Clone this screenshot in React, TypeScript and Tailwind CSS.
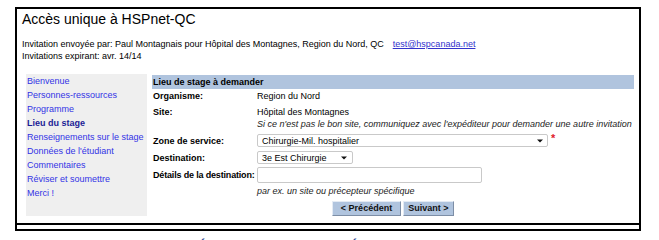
const links = [
  "Bienvenue",
  "Personnes-ressources",
  "Programme",
  "Lieu du stage",
  "Renseignements sur le stage",
  "Données de l'étudiant",
  "Commentaires",
  "Réviser et soumettre",
  "Merci !",
];

function Caret() {
  return (
    <svg width="6" height="4" viewBox="0 0 6 4" className="shrink-0">
      <path d="M0 0.5 H6 L3 3.5 Z" fill="#111" />
    </svg>
  );
}

export default function App() {
  return (
    <main className="w-[659px] h-[240px] overflow-hidden bg-white text-black font-['Liberation_Sans',Arial,sans-serif] text-[9px]">
      <div className="pt-[7px] pl-[15px]">
        <div className="w-[626px] border-2 border-black">
          <div className="pt-[2px] pl-[5px] pr-[5px] pb-[7px]">
            <h1 className="text-[14px] leading-[16px] font-normal">Accès unique à HSPnet-QC</h1>

            <div className="mt-[11px] leading-[12px]">
              <div className="flex">
                <span>Invitation envoyée par: Paul Montagnais pour Hôpital des Montagnes, Region du Nord, QC</span>
                <a href="#" className="ml-[9px] text-[#3333cc] underline">test@hspcanada.net</a>
              </div>
              <div>Invitations expirant: avr. 14/14</div>
            </div>

            <div className="mt-[12px] ml-[4px] flex gap-[5px]">
              <nav className="w-[121px] shrink-0 bg-[#efefef] pl-[1px]">
                {links.map((l) => (
                  <div
                    key={l}
                    className={
                      l === "Lieu du stage"
                        ? "leading-[14px] font-bold text-[#1c1c96] whitespace-nowrap"
                        : "leading-[14px] text-[#3333e6] whitespace-nowrap"
                    }
                  >
                    {l}
                  </div>
                ))}
              </nav>

              <section className="flex-1 pt-[1px] leading-[12px]">
                <div className="h-[14px] leading-[14px] bg-[#b0c4de] pl-[1px] font-bold">
                  Lieu de stage à demander
                </div>

                <div className="grid grid-cols-[105px_1fr]">
                  <div className="pl-[1px] pt-[1px] pb-[4px] font-bold">Organisme:</div>
                  <div className="pt-[1px] pb-[4px]">Region du Nord</div>

                  <div className="pl-[1px] font-bold">Site:</div>
                  <div>
                    <div>Hôpital des Montagnes</div>
                    <div className="italic text-[#222]">
                      Si ce n'est pas le bon site, communiquez avec l'expéditeur pour demander une autre invitation
                    </div>
                  </div>

                  <div className="pl-[1px] mt-[4px] h-[13px] flex items-center font-bold">Zone de service:</div>
                  <div className="mt-[4px] flex items-start">
                    <div className="w-[291px] h-[13px] flex items-center justify-between border border-[#c9c9c9] rounded-[2px] bg-white pl-[4px] pr-[4px]">
                      <span>Chirurgie-Mil. hospitalier</span>
                      <Caret />
                    </div>
                    <span className="ml-[3px] -mt-[1px] text-[11px] leading-[11px] font-bold text-[#e0202a]">*</span>
                  </div>

                  <div className="pl-[1px] mt-[4px] h-[13px] flex items-center font-bold">Destination:</div>
                  <div className="mt-[4px]">
                    <div className="w-[96px] h-[13px] flex items-center justify-between border border-[#c9c9c9] rounded-[2px] bg-white pl-[4px] pr-[5px]">
                      <span>3e Est Chirurgie</span>
                      <Caret />
                    </div>
                  </div>

                  <div className="pl-[1px] mt-[3px] h-[16px] flex items-center font-bold whitespace-nowrap tracking-[-0.17px]">
                    Détails de la destination:
                  </div>
                  <div className="mt-[3px]">
                    <div className="w-[225px] h-[16px] border border-[#c9c9c9] rounded-[2px] bg-white" />
                  </div>

                  <div />
                  <div className="mt-[2px] italic text-[#222]">par ex. un site ou précepteur spécifique</div>
                </div>

                <div className="mt-[4px] flex justify-center gap-[2px]">
                  <button className="w-[69px] h-[15px] bg-[#b0c4de] border border-t-[#e4ebf4] border-l-[#e4ebf4] border-b-[#7d8ea6] border-r-[#7d8ea6] font-bold text-[9px] leading-[13px] text-[#111]">
                    &lt; Précédent
                  </button>
                  <button className="w-[51px] h-[15px] bg-[#b0c4de] border border-t-[#e4ebf4] border-l-[#e4ebf4] border-b-[#7d8ea6] border-r-[#7d8ea6] font-bold text-[9px] leading-[13px] text-[#111]">
                    Suivant &gt;
                  </button>
                </div>
              </section>
            </div>
          </div>
          <div className="h-[6px] border-t-2 border-black" />
        </div>
      </div>

      <div className="mt-[8px] pl-[198px] flex text-[13px] leading-none font-bold text-[#1f3f8f] whitespace-nowrap">
        <span>Étape suivante</span>
        <span className="ml-[60px]">Éducation</span>
      </div>
    </main>
  );
}
